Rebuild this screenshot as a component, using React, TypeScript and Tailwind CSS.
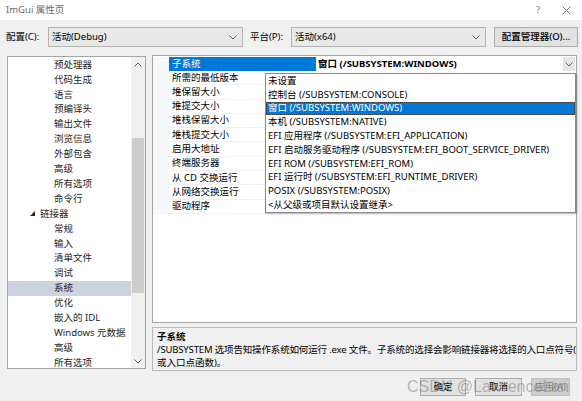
import React from 'react';

const tree: { t: string; lvl: number; sel?: boolean; open?: boolean }[] = [
  { t: '预处理器', lvl: 1 },
  { t: '代码生成', lvl: 1 },
  { t: '语言', lvl: 1 },
  { t: '预编译头', lvl: 1 },
  { t: '输出文件', lvl: 1 },
  { t: '浏览信息', lvl: 1 },
  { t: '外部包含', lvl: 1 },
  { t: '高级', lvl: 1 },
  { t: '所有选项', lvl: 1 },
  { t: '命令行', lvl: 1 },
  { t: '链接器', lvl: 0, open: true },
  { t: '常规', lvl: 1 },
  { t: '输入', lvl: 1 },
  { t: '清单文件', lvl: 1 },
  { t: '调试', lvl: 1 },
  { t: '系统', lvl: 1, sel: true },
  { t: '优化', lvl: 1 },
  { t: '嵌入的 IDL', lvl: 1 },
  { t: 'Windows 元数据', lvl: 1 },
  { t: '高级', lvl: 1 },
  { t: '所有选项', lvl: 1 },
];

const props = [
  '所需的最低版本',
  '堆保留大小',
  '堆提交大小',
  '堆栈保留大小',
  '堆栈提交大小',
  '启用大地址',
  '终端服务器',
  '从 CD 交换运行',
  '从网络交换运行',
  '驱动程序',
];

const options = [
  '未设置',
  '控制台 (/SUBSYSTEM:CONSOLE)',
  '窗口 (/SUBSYSTEM:WINDOWS)',
  '本机 (/SUBSYSTEM:NATIVE)',
  'EFI 应用程序 (/SUBSYSTEM:EFI_APPLICATION)',
  'EFI 启动服务驱动程序 (/SUBSYSTEM:EFI_BOOT_SERVICE_DRIVER)',
  'EFI ROM (/SUBSYSTEM:EFI_ROM)',
  'EFI 运行时 (/SUBSYSTEM:EFI_RUNTIME_DRIVER)',
  'POSIX (/SUBSYSTEM:POSIX)',
  '<从父级或项目默认设置继承>',
];

function Chevron({ className = '' }: { className?: string }) {
  return (
    <svg width="8" height="5" viewBox="0 0 8 5" className={className}>
      <path d="M0.5 0.5 L4 4 L7.5 0.5" fill="none" stroke="#606060" strokeWidth="1" />
    </svg>
  );
}

function Combo({ text, w }: { text: string; w: string }) {
  return (
    <div className={`${w} h-[20px] bg-[#e8e8e8] border border-[#b4b4b4] flex items-center justify-between pl-[3px] pr-[5px]`}>
      <span>{text}</span>
      <Chevron />
    </div>
  );
}

export default function App() {
  return (
    <div
      className="relative w-[582px] h-[401px] bg-[#f0f0f0] flex flex-col text-[9.5px] text-black overflow-hidden"
      style={{ fontFamily: '"Noto Sans", "Noto Sans CJK SC", sans-serif' }}
    >
      {/* title bar */}
      <div className="h-[20px] bg-white flex items-center justify-between pl-[6px] pr-[11px] text-[#6a6a6a]">
        <span>ImGui 属性页</span>
        <div className="flex items-center gap-[22px] text-[#777]">
          <span>?</span>
          <svg width="9" height="9" viewBox="0 0 9 9">
            <path d="M0.5 0.5 L8.5 8.5 M8.5 0.5 L0.5 8.5" stroke="#777" strokeWidth="1" />
          </svg>
        </div>
      </div>

      {/* config row */}
      <div className="mt-[7px] flex items-center pl-[6px]">
        <span className="w-[42px]">配置(C):</span>
        <Combo text="活动(Debug)" w="w-[195px]" />
        <span className="ml-[7px] w-[41px]">平台(P):</span>
        <Combo text="活动(x64)" w="w-[195px]" />
        <div className="ml-[8px] w-[84px] h-[20px] bg-[#e1e1e1] border border-[#adadad] flex items-center justify-center font-medium">
          配置管理器(O)...
        </div>
      </div>

      {/* main */}
      <div className="mt-[8px] flex">
        {/* tree */}
        <div className="ml-[7px] mt-[1px] w-[139px] h-[313px] bg-white border border-[#a5a5a5] flex">
          <div className="flex-1 pt-[0.5px]">
            {tree.map((it, i) => (
              <div
                key={i}
                className={`h-[14.9px] flex items-center text-[#1e1e1e] ${it.sel ? 'bg-[#cdd2df]' : ''} ${it.lvl === 1 ? 'pl-[46px]' : 'pl-[22px]'}`}
              >
                {it.open && (
                  <svg width="5" height="5" viewBox="0 0 5 5" className="mr-[5px]">
                    <path d="M5 0 L5 5 L0 5 Z" fill="#222" />
                  </svg>
                )}
                <span>{it.t}</span>
              </div>
            ))}
          </div>
          <div className="w-[14px] bg-[#f0f0f0] flex flex-col items-center">
            <div className="h-[14px] flex items-center justify-center">
              <Chevron className="rotate-180" />
            </div>
            <div className="h-[67px]" />
            <div className="w-[12px] h-[155px] bg-[#cdcdcd]" />
            <div className="flex-1" />
            <div className="h-[14px] flex items-center justify-center">
              <Chevron />
            </div>
          </div>
        </div>

        {/* right */}
        <div className="ml-[6px] w-[425px] flex flex-col">
          <div className="relative h-[268px] bg-white border border-[#a5a5a5] pt-[1px]">
            {/* header row */}
            <div className="flex h-[14px]">
              <div className="w-[16px] bg-[#f5f7fb]" />
              <div className="w-[147px] bg-[#0078d7] text-white flex items-center pl-[3px]">子系统</div>
              <div className="flex-1 flex items-center pl-[2px] font-bold">
                <span className="flex-1">窗口 (/SUBSYSTEM:WINDOWS)</span>
                <div className="w-[12px] h-[14px] bg-[#e5e5e5] flex items-center justify-center mr-[1px]">
                  <Chevron />
                </div>
              </div>
            </div>
            {props.map((p, i) => (
              <div key={i} className="flex h-[14.3px]">
                <div className="w-[16px] bg-[#f5f7fb]" />
                <div className="flex-1 border-b border-[#f0f0f0] flex items-center pl-[3px]">{p}</div>
              </div>
            ))}

            {/* dropdown list */}
            <div className="absolute left-[112px] top-[17px] w-[311px] h-[140px] bg-white border border-[#8a8a8a] shadow-[1px_1px_2px_rgba(0,0,0,0.25)]">
              {options.map((o, i) => (
                <div
                  key={i}
                  className={`h-[13.8px] flex items-center pl-[2px] ${i === 2 ? 'bg-[#0078d7] text-white outline outline-1 outline-dotted outline-[#3a3a3a] -outline-offset-1' : ''}`}
                >
                  {o}
                </div>
              ))}
            </div>
          </div>

          <div className="mt-[4px] h-[44px] border border-[#b9b9b9] px-[4px] pt-[2px] leading-[13px]">
            <div className="font-bold">子系统</div>
            <div className="whitespace-nowrap tracking-[-0.15px]">
              /SUBSYSTEM 选项告知操作系统如何运行 .exe 文件。子系统的选择会影响链接器将选择的入口点符号(
            </div>
            <div>或入口点函数)。</div>
          </div>
        </div>
      </div>

      {/* buttons */}
      <div className="mt-[7px] flex justify-end pr-[12px] gap-[9px]">
        <div className="w-[46px] h-[18px] bg-[#e1e1e1] border border-[#adadad] flex items-center justify-center">确定</div>
        <div className="w-[47px] h-[18px] bg-[#e1e1e1] border border-[#adadad] flex items-center justify-center">取消</div>
        <div className="w-[39px] h-[18px] bg-[#cccccc] border border-[#bfbfbf] flex items-center justify-center text-[#838383]">应用(A)</div>
      </div>

      {/* watermark */}
      <div
        className="absolute left-[407px] top-[377px] whitespace-nowrap text-[16px] leading-[20px] text-[rgba(120,120,120,0.5)] pointer-events-none"
        style={{ fontFamily: '"Liberation Sans", sans-serif' }}
      >
        CSDN @LawrenceLan
      </div>
    </div>
  );
}
